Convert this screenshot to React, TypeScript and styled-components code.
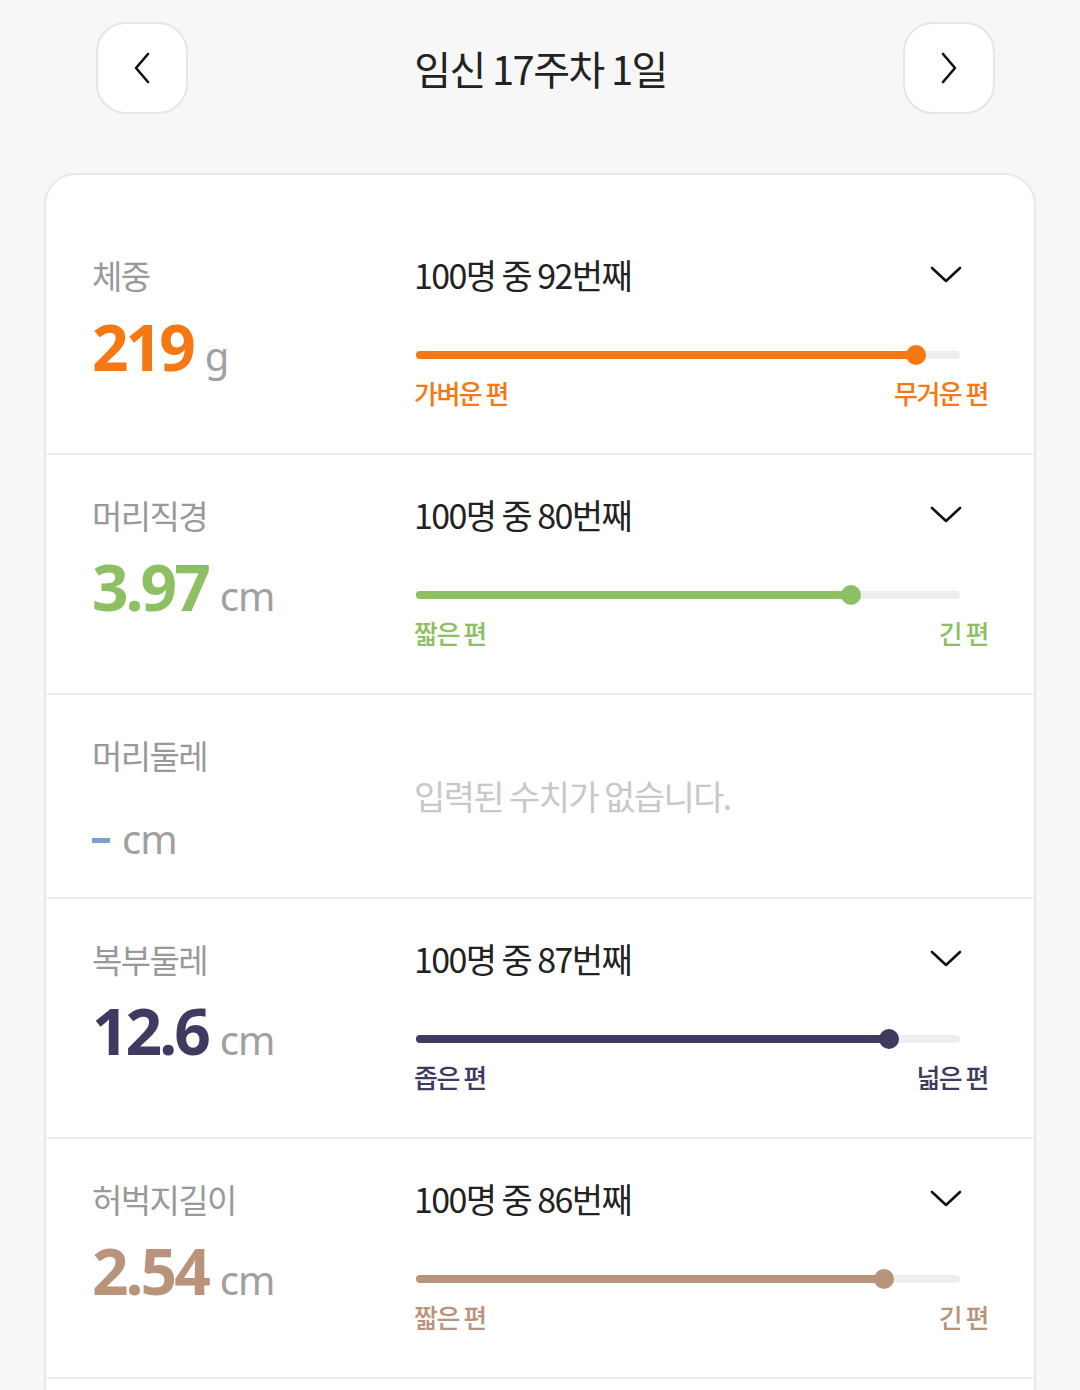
import { FC } from "react";
import styled, { createGlobalStyle } from "styled-components";

const GlobalStyle = createGlobalStyle`
    html, body {
        margin: 0;
        padding: 0;
        background: #f7f7f7;
        font-family: "Noto Sans CJK KR", "Noto Sans", sans-serif;
        overflow: hidden;
    }
`

interface IMeasure {
    label: string
    value: string | null
    unit: string
    color: string
    rank?: number
    low?: string
    high?: string
}

const measures: IMeasure[] = [
    { label: "체중", value: "219", unit: "g", color: "#f57812", rank: 92, low: "가벼운 편", high: "무거운 편" },
    { label: "머리직경", value: "3.97", unit: "cm", color: "#8cc063", rank: 80, low: "짧은 편", high: "긴 편" },
    { label: "머리둘레", value: null, unit: "cm", color: "#7b9fcf" },
    { label: "복부둘레", value: "12.6", unit: "cm", color: "#3f3a60", rank: 87, low: "좁은 편", high: "넓은 편" },
    { label: "허벅지길이", value: "2.54", unit: "cm", color: "#b9937a", rank: 86, low: "짧은 편", high: "긴 편" },
]

const ChevronDown: FC = () => (
    <svg width="32" height="18" viewBox="0 0 32 18" fill="none">
        <path d="M2 2 L16 15 L30 2" stroke="#111" strokeWidth="2.6" strokeLinecap="round" strokeLinejoin="round" />
    </svg>
)

const Arrow: FC<{ dir: "left" | "right" }> = ({ dir }) => (
    <svg width="18" height="32" viewBox="0 0 18 32" fill="none">
        <path
            d={dir === "left" ? "M15 2 L3 16 L15 30" : "M3 2 L15 16 L3 30"}
            stroke="#111"
            strokeWidth="2.6"
            strokeLinecap="round"
            strokeLinejoin="round"
        />
    </svg>
)

const MeasureRow: FC<{ m: IMeasure }> = ({ m }) => {
    if (m.value === null) {
        return (
            <Row $empty>
                <Left>
                    <Label>{m.label}</Label>
                    <EmptyValue>
                        <Dash $color={m.color} />
                        <Unit>{m.unit}</Unit>
                    </EmptyValue>
                </Left>
                <EmptyMsg>입력된 수치가 없습니다.</EmptyMsg>
            </Row>
        )
    }
    const pct = m.rank ?? 0
    return (
        <Row>
            <Left>
                <Label>{m.label}</Label>
                <ValueLine>
                    <Value $color={m.color}>{m.value}</Value>
                    <Unit>{m.unit}</Unit>
                </ValueLine>
            </Left>
            <Right>
                <RankLine>
                    <Rank>100명 중 {m.rank}번째</Rank>
                    <ChevronWrap><ChevronDown /></ChevronWrap>
                </RankLine>
                <Track>
                    <Fill $color={m.color} style={{ width: `${pct}%` }} />
                    <Thumb $color={m.color} style={{ left: `${pct}%` }} />
                </Track>
                <Ends $color={m.color}>
                    <span>{m.low}</span>
                    <span>{m.high}</span>
                </Ends>
            </Right>
        </Row>
    )
}

const App: FC = () => {
    return (
        <Page>
            <GlobalStyle />
            <Header>
                <NavButton><Arrow dir="left" /></NavButton>
                <Title>임신 17주차 1일</Title>
                <NavButton><Arrow dir="right" /></NavButton>
            </Header>
            <Card>
                {measures.map((m) => <MeasureRow key={m.label} m={m} />)}
            </Card>
        </Page>
    )
}

export default App


const Page = styled.div`
    width: 1080px;
    height: 1390px;
    overflow: hidden;
    background: #f7f7f7;
`

const Header = styled.div`
    display: grid;
    grid-template-columns: 92px 1fr 92px;
    align-items: center;
    padding: 22px 85px 0 96px;
    height: 92px;
`

const NavButton = styled.div`
    width: 92px;
    height: 92px;
    box-sizing: border-box;
    border: 2px solid #e6e6e6;
    border-radius: 30px;
    background: #fff;
    display: flex;
    align-items: center;
    justify-content: center;
`

const Title = styled.div`
    text-align: center;
    font-size: 40px;
    letter-spacing: -1.6px;
    color: #222;
    line-height: 48px;
    padding-right: 10px;
`

const Card = styled.div`
    margin: 59px 44px 0;
    background: #fff;
    border: 2px solid #e8e8e8;
    border-radius: 32px;
    padding: 40px 0 200px;
`

const Row = styled.div<{ $empty?: boolean }>`
    display: grid;
    grid-template-columns: 322px 1fr;
    align-items: ${props => props.$empty ? "center" : "start"};
    height: ${props => props.$empty ? "202px" : "238px"};
    padding: 0 46px;
    border-bottom: 2px solid #ededed;
`

const Left = styled.div`
    display: flex;
    flex-direction: column;
    padding-top: 40px;
    align-self: start;
`

const Label = styled.div`
    font-size: 33px;
    line-height: 40px;
    letter-spacing: -1.6px;
    color: #999;
`

const ValueLine = styled.div`
    display: flex;
    align-items: baseline;
    margin-top: 12px;
`

const Value = styled.span<{ $color: string }>`
    font-family: "Noto Sans", sans-serif;
    font-size: 64px;
    line-height: 80px;
    font-weight: 700;
    letter-spacing: -3px;
    color: ${props => props.$color};
`

const Unit = styled.span`
    font-family: "Noto Sans", sans-serif;
    font-size: 40px;
    letter-spacing: -1px;
    color: #a0a0a0;
    margin-left: 12px;
`

const EmptyValue = styled.div`
    display: flex;
    align-items: center;
    margin-top: 43px;
    height: 40px;
`

const Dash = styled.span<{ $color: string }>`
    display: block;
    width: 18px;
    height: 5px;
    background: ${props => props.$color};
    margin-top: 4px;
`

const EmptyMsg = styled.div`
    font-size: 34px;
    letter-spacing: -1.6px;
    color: #c8c8c8;
    margin-top: -2px;
`

const Right = styled.div`
    display: flex;
    flex-direction: column;
    padding-top: 40px;
`

const RankLine = styled.div`
    display: flex;
    align-items: center;
    justify-content: space-between;
    height: 40px;
    padding-right: 26px;
`

const Rank = styled.div`
    font-size: 34px;
    letter-spacing: -1.6px;
    color: #222;
    line-height: 40px;
`

const ChevronWrap = styled.div`
    display: flex;
    align-items: center;
`

const Track = styled.div`
    position: relative;
    margin: 56px 28px 0 2px;
    height: 8px;
    border-radius: 4px;
    background: #eeeeee;
`

const Fill = styled.div<{ $color: string }>`
    height: 8px;
    border-radius: 4px;
    background: ${props => props.$color};
`

const Thumb = styled.div<{ $color: string }>`
    position: absolute;
    top: 50%;
    width: 20px;
    height: 20px;
    border-radius: 50%;
    background: ${props => props.$color};
    transform: translate(-50%, -50%);
`

const Ends = styled.div<{ $color: string }>`
    display: flex;
    justify-content: space-between;
    margin-top: 18px;
    font-size: 26px;
    font-weight: 500;
    letter-spacing: -1.5px;
    line-height: 32px;
    color: ${props => props.$color};
`
